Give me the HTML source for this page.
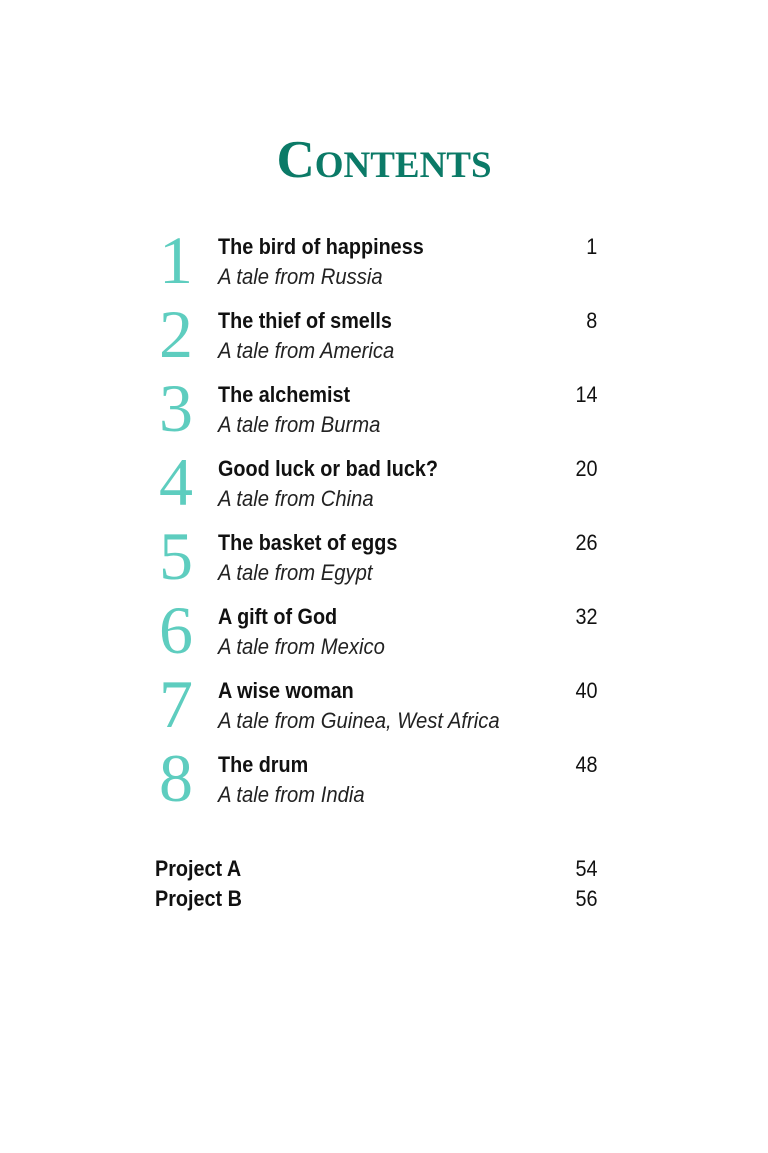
<!DOCTYPE html>
<html><head><meta charset="utf-8"><style>
body{margin:0;width:768px;height:1153px;background:#fff;position:relative;font-family:"Liberation Sans Narrow","Liberation Sans",sans-serif;}
.t{position:absolute;left:0;width:768px;top:130px;text-align:center;font-family:"Liberation Serif",serif;color:#0b7a67;font-size:53px;font-weight:bold;font-variant:small-caps;letter-spacing:0px;}
.row{position:absolute;left:0;width:768px;height:74px;}
.n{position:absolute;left:150px;width:52px;text-align:center;top:-14px;font-family:"Liberation Serif",serif;font-size:68px;color:#5ecdbf;line-height:1;}
.h,.s,.pr{transform:scaleX(0.9);transform-origin:left top;white-space:nowrap;}
.h{position:absolute;left:218px;top:-4px;font-weight:bold;font-size:22px;color:#111;line-height:1;}
.s{position:absolute;left:218px;top:26px;font-style:italic;font-size:22px;color:#222;line-height:1;transform:scaleX(0.92);}
.p,.pp{transform:scaleX(0.9);transform-origin:right top;}
.p{position:absolute;right:171px;top:-4px;font-size:22px;color:#111;line-height:1;}
.pr{position:absolute;left:155px;font-weight:bold;font-size:22px;color:#111;line-height:1;}
.pp{position:absolute;right:171px;font-size:22px;color:#111;line-height:1;}
</style></head><body>
<div class="t">Contents</div>
<div class="row" style="top:240px"><div class="n">1</div><div class="h">The bird of happiness</div><div class="s">A tale from Russia</div><div class="p">1</div></div>
<div class="row" style="top:314px"><div class="n">2</div><div class="h">The thief of smells</div><div class="s">A tale from America</div><div class="p">8</div></div>
<div class="row" style="top:388px"><div class="n">3</div><div class="h">The alchemist</div><div class="s">A tale from Burma</div><div class="p">14</div></div>
<div class="row" style="top:462px"><div class="n">4</div><div class="h">Good luck or bad luck?</div><div class="s">A tale from China</div><div class="p">20</div></div>
<div class="row" style="top:536px"><div class="n">5</div><div class="h">The basket of eggs</div><div class="s">A tale from Egypt</div><div class="p">26</div></div>
<div class="row" style="top:610px"><div class="n">6</div><div class="h">A gift of God</div><div class="s">A tale from Mexico</div><div class="p">32</div></div>
<div class="row" style="top:684px"><div class="n">7</div><div class="h">A wise woman</div><div class="s">A tale from Guinea, West Africa</div><div class="p">40</div></div>
<div class="row" style="top:758px"><div class="n">8</div><div class="h">The drum</div><div class="s">A tale from India</div><div class="p">48</div></div>
<div class="pr" style="top:858px">Project A</div><div class="pp" style="top:858px">54</div>
<div class="pr" style="top:888px">Project B</div><div class="pp" style="top:888px">56</div>
</body></html>
